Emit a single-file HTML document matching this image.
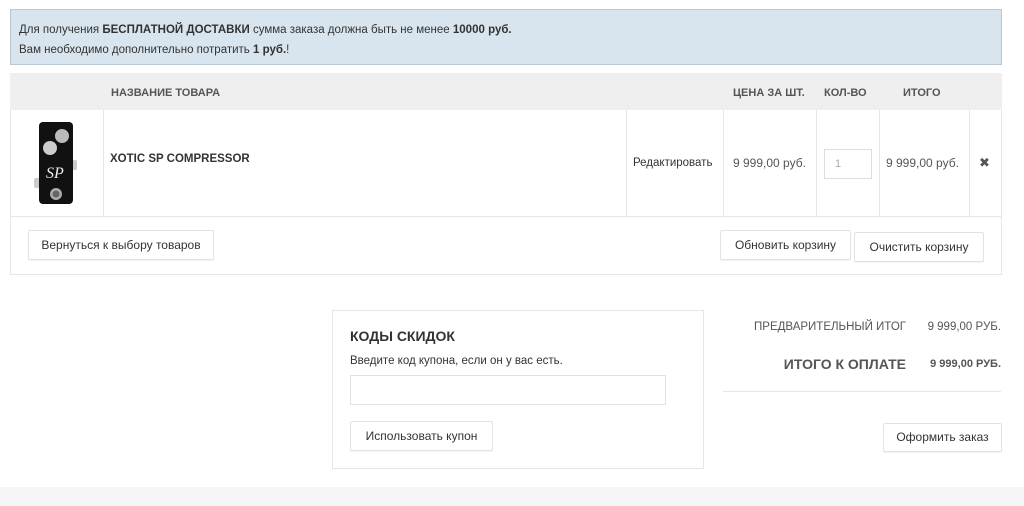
<!DOCTYPE html>
<html><head><meta charset="utf-8"><style>
*{margin:0;padding:0;box-sizing:border-box}
body{width:1024px;height:506px;background:#fff;font-family:"Liberation Sans","DejaVu Sans",sans-serif;color:#333;position:relative;overflow:hidden;font-size:12px}
.a{position:absolute}
.btn{position:absolute;border:1px solid #e2e2e2;border-radius:2px;background:#fff;font-size:12px;color:#333;text-align:center;box-shadow:0 1px 1px rgba(0,0,0,.05)}
.vl{position:absolute;top:110px;height:106px;width:1px;background:#e6e6e6}
.h{position:absolute;top:87px;font-size:11px;font-weight:bold;color:#555}
</style></head><body>
<div class="a" style="left:10px;top:9px;width:992px;height:56px;background:#d9e5ee;border:1px solid #b9c8d4"></div>
<div class="a" style="left:19px;top:20px;font-size:11.5px;color:#333;line-height:20px">Для получения <b>БЕСПЛАТНОЙ ДОСТАВКИ</b> сумма заказа должна быть не менее <b>10000 руб.</b><br>Вам необходимо дополнительно потратить <b>1 руб.</b>!</div>

<div class="a" style="left:10px;top:73px;width:992px;height:202px;border:1px solid #e6e6e6"></div>
<div class="a" style="left:10px;top:73px;width:992px;height:37px;background:#efefef"></div>
<div class="h" style="left:111px">НАЗВАНИЕ ТОВАРА</div>
<div class="h" style="left:733px">ЦЕНА ЗА ШТ.</div>
<div class="h" style="left:824px">КОЛ-ВО</div>
<div class="h" style="left:903px">ИТОГО</div>
<div class="vl" style="left:103px"></div>
<div class="vl" style="left:626px"></div>
<div class="vl" style="left:723px"></div>
<div class="vl" style="left:816px"></div>
<div class="vl" style="left:879px"></div>
<div class="vl" style="left:969px"></div>
<div class="a" style="left:10px;top:216px;width:992px;height:1px;background:#e6e6e6"></div>

<svg class="a" style="left:32px;top:120px" width="48" height="86" viewBox="0 0 48 86">
<rect x="2" y="58" width="6" height="10" rx="2" fill="#ccc"/>
<rect x="39" y="40" width="6" height="10" rx="2" fill="#ccc"/>
<rect x="7" y="2" width="34" height="82" rx="4" fill="#111"/>
<circle cx="30" cy="16" r="7" fill="#bbb"/><circle cx="18" cy="28" r="7" fill="#ccc"/>
<text x="14" y="58" font-family="Liberation Serif" font-style="italic" font-size="16" fill="#eee">SP</text>
<circle cx="24" cy="74" r="6" fill="#aaa"/><circle cx="24" cy="74" r="3.5" fill="#666"/>
</svg>
<div class="a" style="left:110px;top:153px;font-size:11.5px;font-weight:bold;color:#333">XOTIC SP COMPRESSOR</div>
<div class="a" style="left:633px;top:157px;font-size:11.5px;color:#333">Редактировать</div>
<div class="a" style="left:733px;top:156px;font-size:12px;color:#555">9 999,00 руб.</div>
<div class="a" style="left:824px;top:149px;width:48px;height:30px;border:1px solid #ddd;font-size:11px;color:#aaa;padding:8px 0 0 10px">1</div>
<div class="a" style="left:886px;top:156px;font-size:12px;color:#555">9 999,00 руб.</div>
<div class="a" style="left:979px;top:155px;font-size:13px;font-weight:bold;color:#555">✖</div>

<div class="btn" style="left:28px;top:230px;width:186px;height:30px;line-height:28px">Вернуться к выбору товаров</div>
<div class="btn" style="left:720px;top:230px;width:131px;height:30px;line-height:28px">Обновить корзину</div>
<div class="btn" style="left:854px;top:232px;width:130px;height:30px;line-height:28px">Очистить корзину</div>

<div class="a" style="left:332px;top:310px;width:372px;height:159px;border:1px solid #e6e6e6"></div>
<div class="a" style="left:350px;top:328px;font-size:14px;font-weight:bold;color:#333">КОДЫ СКИДОК</div>
<div class="a" style="left:350px;top:355px;font-size:11.5px;color:#333">Введите код купона, если он у вас есть.</div>
<div class="a" style="left:350px;top:375px;width:316px;height:30px;border:1px solid #e2e2e2"></div>
<div class="btn" style="left:350px;top:421px;width:143px;height:30px;line-height:28px">Использовать купон</div>

<div class="a" style="left:700px;top:321px;width:206px;text-align:right;font-size:11.5px;color:#555">ПРЕДВАРИТЕЛЬНЫЙ ИТОГ</div>
<div class="a" style="left:900px;top:321px;width:101px;text-align:right;font-size:11.5px;color:#555">9 999,00 РУБ.</div>
<div class="a" style="left:700px;top:356px;width:206px;text-align:right;font-size:14px;font-weight:bold;color:#555">ИТОГО К ОПЛАТЕ</div>
<div class="a" style="left:900px;top:358px;width:101px;text-align:right;font-size:11px;font-weight:bold;color:#555">9 999,00 РУБ.</div>
<div class="a" style="left:723px;top:391px;width:278px;height:1px;background:#e6e6e6"></div>
<div class="btn" style="left:883px;top:423px;width:119px;height:29px;line-height:27px">Оформить заказ</div>

<div class="a" style="left:0;top:487px;width:1024px;height:19px;background:#f5f5f5"></div>
</body></html>
